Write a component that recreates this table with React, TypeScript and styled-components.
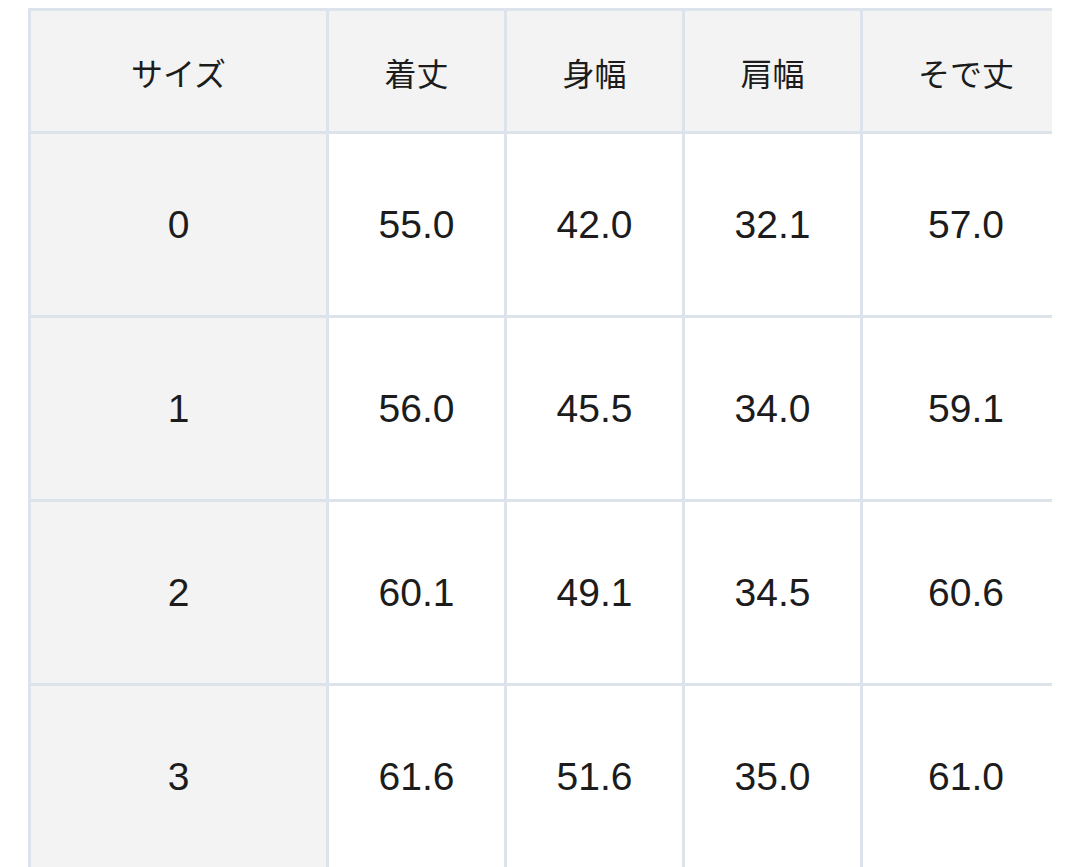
import React, { FC } from 'react';
import styled, { createGlobalStyle } from 'styled-components';

const GlobalStyle = createGlobalStyle`
  html, body {
    margin: 0;
    padding: 0;
    background: #ffffff;
    overflow: hidden;
  }
`;

const Page = styled.div`
  padding: 8px 0 0 28px;
`;

const ScrollArea = styled.div`
  overflow: hidden;
  width: 1024px;
`;

const Grid = styled.div`
  display: grid;
  grid-template-columns: 295px 175px 175px 175px 206px;
  grid-template-rows: 120px repeat(4, 181px);
  gap: 3px;
  width: max-content;
  background-color: #dde3ea;
  border-top: 3px solid #dde3ea;
  border-left: 3px solid #dde3ea;
`;

const Cell = styled.div<{ $shaded?: boolean; $head?: boolean }>`
  align-items: center;
  background-color: ${(props) => (props.$shaded ? '#f3f3f3' : '#ffffff')};
  color: #1c1c1c;
  display: flex;
  justify-content: center;
  font-family: ${(props) =>
    props.$head
      ? '"Noto Sans CJK JP", "Noto Sans", sans-serif'
      : '"Liberation Sans", Arial, sans-serif'};
  font-size: ${(props) => (props.$head ? '32px' : '39px')};
  font-weight: 400;
  padding-top: ${(props) => (props.$head ? '2px' : '0')};
`;

const headers = ['サイズ', '着丈', '身幅', '肩幅', 'そで丈'];

const rows = [
  ['0', '55.0', '42.0', '32.1', '57.0'],
  ['1', '56.0', '45.5', '34.0', '59.1'],
  ['2', '60.1', '49.1', '34.5', '60.6'],
  ['3', '61.6', '51.6', '35.0', '61.0'],
];

const App: FC = () => {
  return (
    <>
      <GlobalStyle />
      <Page>
        <ScrollArea>
          <Grid>
            {headers.map((h) => (
              <Cell key={h} $shaded $head>
                {h}
              </Cell>
            ))}
            {rows.map((row) =>
              row.map((value, idx) => (
                <Cell key={`${row[0]}-${idx}`} $shaded={idx === 0}>
                  {value}
                </Cell>
              ))
            )}
          </Grid>
        </ScrollArea>
      </Page>
    </>
  );
};

export default App;
